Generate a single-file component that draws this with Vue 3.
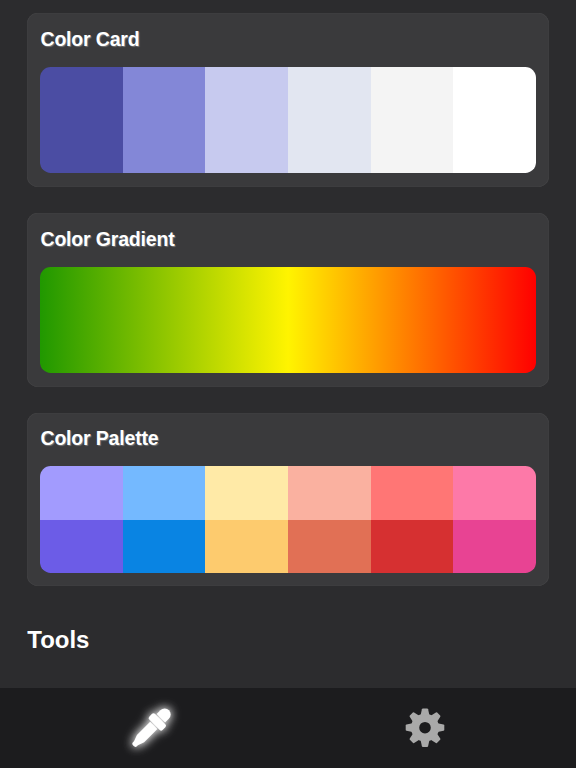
<script setup>
import { ref } from 'vue';

const activeTab = ref('colors');

const cardColors = ['#4b4da3', '#8387d7', '#c7caef', '#e2e6f1', '#f4f4f4', '#ffffff'];

const paletteColors = [
  '#a29bfe', '#74b9ff', '#ffeaa7', '#fab1a0', '#ff7675', '#fd79a8',
  '#6c5ce7', '#0984e3', '#fdcb6e', '#e17055', '#d63031', '#e84393'
];

const teeth = [0, 45, 90, 135, 180, 225, 270, 315];
</script>

<template>
  <div class="page">
    <main class="content">
      <section class="card">
        <h3>Color Card</h3>
        <div class="swatches">
          <div v-for="color in cardColors" :key="color" :style="{ backgroundColor: color }"></div>
        </div>
      </section>

      <section class="card">
        <h3>Color Gradient</h3>
        <div class="swatches gradient"></div>
      </section>

      <section class="card">
        <h3>Color Palette</h3>
        <div class="swatches palette">
          <div v-for="color in paletteColors" :key="color" :style="{ backgroundColor: color }"></div>
        </div>
      </section>

      <h2>Tools</h2>
    </main>

    <nav class="tabbar">
      <button :class="{ active: activeTab === 'colors' }" aria-label="Colors" @click="activeTab = 'colors'">
        <svg viewBox="0 0 60 60">
          <g transform="translate(29.8 30.4) rotate(45)">
            <path d="M-6 -14.2V-19.5A6 6.2 0 0 1 6 -19.5V-14.2Z" />
            <rect x="-9.4" y="-13.2" width="18.8" height="8" rx="2" />
            <path d="M-5.1 -4.2H5.1V14.5L2.8 21V22.4Q2.8 24.6 0 24.6T-2.8 22.4V21L-5.1 14.5Z" />
          </g>
        </svg>
      </button>
      <button :class="{ active: activeTab === 'settings' }" aria-label="Settings" @click="activeTab = 'settings'">
        <svg viewBox="0 0 60 60">
          <g transform="translate(30 29.7)">
            <circle r="9.9" class="ring" />
            <path
              v-for="angle in teeth"
              :key="angle"
              d="M-4.4 -12.5L-3.1 -18.5Q-2.9 -19.3 -2.1 -19.3H2.1Q2.9 -19.3 3.1 -18.5L4.4 -12.5Z"
              :transform="`rotate(${angle})`"
            />
          </g>
        </svg>
      </button>
    </nav>
  </div>
</template>

<style>
body {
  margin: 0;
  background-color: #2c2c2e;
}
</style>

<style scoped>
.page {
  display: flex;
  flex-direction: column;
  height: 100vh;
  overflow: hidden;
  font-family: "Liberation Sans", Arial, Helvetica, sans-serif;
  color: #ffffff;
  background-color: #2c2c2e;
}

.content {
  flex: 1;
  min-height: 0;
  overflow: hidden;
  padding: 13.33px 26.67px 0;
}

.card {
  box-sizing: border-box;
  height: 173.33px;
  margin-bottom: 26.54px;
  padding: 13.33px;
  border-radius: 10.67px;
  background-color: #3a3a3c;
  box-shadow: inset 0 0 1px rgba(255, 255, 255, 0.2);
}

h3 {
  margin: 0 0 15px;
  padding-left: 0.5px;
  font-size: 19.5px;
  line-height: 25px;
  letter-spacing: -0.18px;
  text-shadow: 1px 1px 1px rgba(255, 255, 255, 0.3);
}

h2 {
  margin: 0;
  padding: 10.8px 0 0 0.6px;
  font-size: 24px;
  line-height: 32px;
}

.swatches {
  display: grid;
  grid-template-columns: repeat(6, 1fr);
  height: 106.67px;
  border-radius: 10.67px;
  overflow: hidden;
}

.gradient {
  background: linear-gradient(to right, #209800, #fff400 50%, #ff0000);
}

.palette {
  grid-template-rows: 1fr 1fr;
}

.tabbar {
  display: flex;
  height: 80px;
  background-color: #1c1c1e;
}

.tabbar button {
  flex: 1;
  display: flex;
  align-items: center;
  justify-content: center;
  padding: 0;
  border: none;
  background: none;
  color: #a9a9a9;
}

.tabbar button:first-child {
  padding-left: 13.33px;
}

.tabbar button:last-child {
  padding-right: 13.33px;
}

.tabbar svg {
  width: 60px;
  height: 60px;
  overflow: visible;
  fill: currentColor;
}

.tabbar .active {
  color: #ffffff;
}

.tabbar .active svg {
  filter: drop-shadow(0 0 5px rgba(255, 255, 255, 0.9)) drop-shadow(0 0 5px rgba(255, 255, 255, 0.4));
}

.ring {
  fill: none;
  stroke: currentColor;
  stroke-width: 8.2;
}
</style>
